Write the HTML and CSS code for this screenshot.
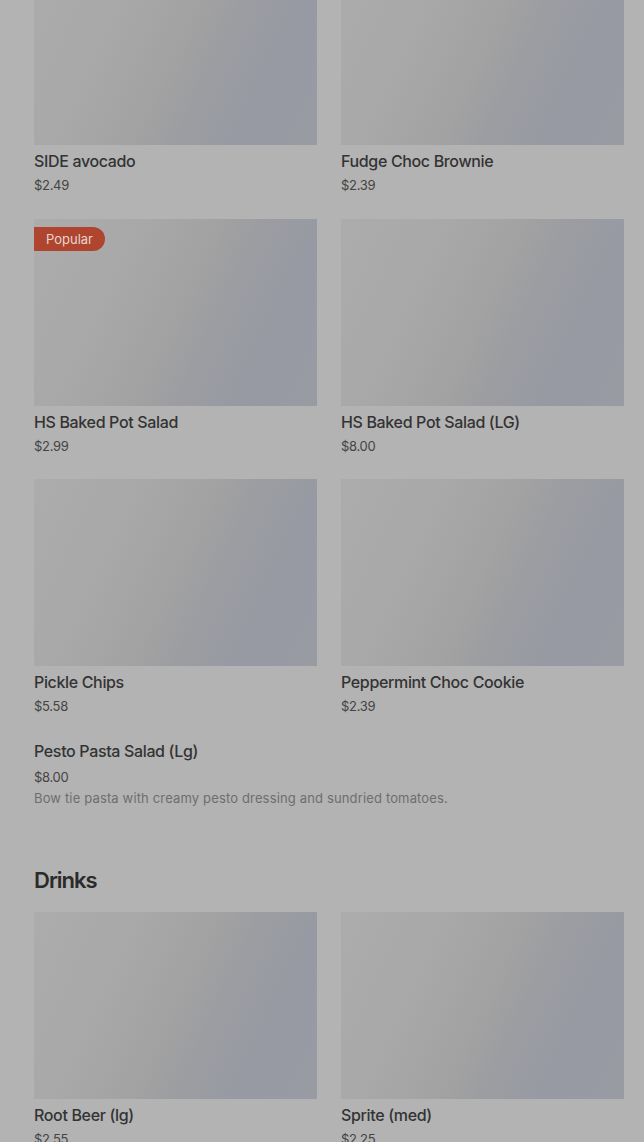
FILE: index.html
```html
<!DOCTYPE html>
<html lang="en">
<head>
    <meta charset="UTF-8">
    <meta name="viewport" content="width=device-width, initial-scale=1.0">
    <title>Menu</title>
    <link rel="stylesheet" href="styles.css">
</head>
<body>
    <div class="menu">
        <!-- Sides & desserts -->
        <section class="section">
            <div class="grid">
                <div class="item">
                    <div class="thumb"></div>
                    <h3 class="name">SIDE avocado</h3>
                    <p class="price">$2.49</p>
                </div>
                <div class="item">
                    <div class="thumb"></div>
                    <h3 class="name">Fudge Choc Brownie</h3>
                    <p class="price">$2.39</p>
                </div>
                <div class="item">
                    <div class="thumb">
                        <span class="badge">Popular</span>
                    </div>
                    <h3 class="name">HS Baked Pot Salad</h3>
                    <p class="price">$2.99</p>
                </div>
                <div class="item">
                    <div class="thumb"></div>
                    <h3 class="name">HS Baked Pot Salad (LG)</h3>
                    <p class="price">$8.00</p>
                </div>
                <div class="item">
                    <div class="thumb"></div>
                    <h3 class="name">Pickle Chips</h3>
                    <p class="price">$5.58</p>
                </div>
                <div class="item">
                    <div class="thumb"></div>
                    <h3 class="name">Peppermint Choc Cookie</h3>
                    <p class="price">$2.39</p>
                </div>
                <div class="item item-wide">
                    <h3 class="name">Pesto Pasta Salad (Lg)</h3>
                    <p class="price">$8.00</p>
                    <p class="desc">Bow tie pasta with creamy pesto dressing and sundried tomatoes.</p>
                </div>
            </div>
        </section>

        <!-- Drinks -->
        <section class="section">
            <h2 class="section-title">Drinks</h2>
            <div class="grid">
                <div class="item">
                    <div class="thumb"></div>
                    <h3 class="name">Root Beer (lg)</h3>
                    <p class="price">$2.55</p>
                </div>
                <div class="item">
                    <div class="thumb"></div>
                    <h3 class="name">Sprite (med)</h3>
                    <p class="price">$2.25</p>
                </div>
            </div>
        </section>
    </div>
</body>
</html>
```

FILE: styles.css
```css
body {
    margin: 0;
    background-color: #b3b3b3;
    font-family: Inter, "Noto Sans", sans-serif;
    color: #333;
}

.menu {
    margin-top: -42px;
    padding: 0 20px 40px 34px;
}

.grid {
    display: grid;
    grid-template-columns: 1fr 1fr;
    column-gap: 24px;
    row-gap: 23.5px;
}

.item-wide {
    grid-column: 1 / -1;
}

.thumb {
    position: relative;
    height: 187px;
    background: linear-gradient(115deg, #acacac 0%, #a8a8a8 30%, #a2a2a2 50%, #9c9da1 62%, #979aa3 78%, #989ba2 100%);
}

.badge {
    position: absolute;
    top: 8px;
    left: 0;
    height: 24px;
    padding: 0 12px;
    line-height: 24px;
    font-size: 13px;
    color: #e6d5d0;
    background-color: #b0452f;
    border-radius: 0 12px 12px 0;
}

.name {
    margin: 6px 0 0;
    font-size: 16px;
    line-height: 20px;
    font-weight: 500;
    letter-spacing: -0.35px;
    color: #333;
}

.price {
    margin: 4px 0 0;
    font-size: 13px;
    line-height: 20px;
    letter-spacing: -0.3px;
    color: #444;
}

.item-wide .name {
    margin-top: 1px;
}

.item-wide .price {
    margin-top: 6px;
}

.desc {
    margin: 2px 0 0;
    font-size: 13px;
    line-height: 18px;
    letter-spacing: 0.15px;
    color: #6e6e6e;
}

.section-title {
    margin: 57px 0 16px;
    font-size: 22px;
    line-height: 32px;
    font-weight: 600;
    letter-spacing: -1px;
    color: #2b2b2b;
}
```
